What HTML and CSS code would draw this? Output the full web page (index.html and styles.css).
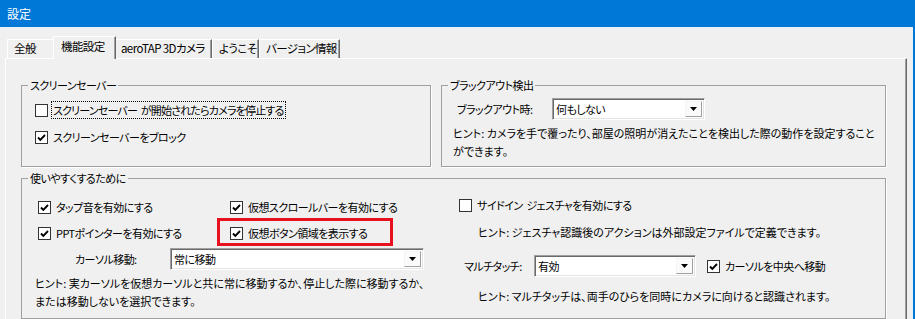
FILE: index.html
```html
<!DOCTYPE html>
<html lang="ja">
<head>
    <meta charset="UTF-8">
    <title>設定</title>
    <link rel="stylesheet" href="styles.css">
</head>
<body>

<div class="window">
    <div class="titlebar">設定</div>

    <div class="tabs">
        <div class="tab tab-general">全般</div>
        <div class="tab tab-active">機能設定</div>
        <div class="tab tab-camera">aeroTAP 3Dカメラ</div>
        <div class="tab tab-welcome">ようこそ</div>
        <div class="tab tab-version">バージョン情報</div>
    </div>

    <div class="panel">
        <div class="top-row">
            <fieldset class="group">
                <legend>スクリーンセーバー</legend>
                <div class="saver">
                    <div class="check">
                        <span class="box"></span>
                        <span class="text focus">スクリーンセーバー が開始されたらカメラを停止する</span>
                    </div>
                    <div class="check">
                        <span class="box checked"><svg viewBox="0 0 11 11"><polyline points="2,5.5 4.3,7.8 9,3"/></svg></span>
                        <span class="text">スクリーンセーバーをブロック</span>
                    </div>
                </div>
            </fieldset>

            <fieldset class="group">
                <legend>ブラックアウト検出</legend>
                <div class="blackout">
                    <div class="combo-row">
                        <span class="combo-label blackout-label">ブラックアウト時:</span>
                        <div class="combo blackout-combo">
                            <span class="value">何もしない</span>
                            <span class="arrow"><svg viewBox="0 0 7 4"><path d="M0 0H7L3.5 4Z"/></svg></span>
                        </div>
                    </div>
                    <p class="hint blackout-hint">ヒント: カメラを手で覆ったり、部屋の照明が消えたことを検出した際の動作を設定すること<br>ができます。</p>
                </div>
            </fieldset>
        </div>

        <fieldset class="group ease">
            <legend>使いやすくするために</legend>
            <div class="ease-cols">
                <div class="ease-left">
                    <div class="check-grid">
                        <div class="check">
                            <span class="box checked"><svg viewBox="0 0 11 11"><polyline points="2,5.5 4.3,7.8 9,3"/></svg></span>
                            <span class="text">タップ音を有効にする</span>
                        </div>
                        <div class="check">
                            <span class="box checked"><svg viewBox="0 0 11 11"><polyline points="2,5.5 4.3,7.8 9,3"/></svg></span>
                            <span class="text">仮想スクロールバーを有効にする</span>
                        </div>
                        <div class="check">
                            <span class="box checked"><svg viewBox="0 0 11 11"><polyline points="2,5.5 4.3,7.8 9,3"/></svg></span>
                            <span class="text">PPTポインターを有効にする</span>
                        </div>
                        <div class="check highlight">
                            <span class="box checked"><svg viewBox="0 0 11 11"><polyline points="2,5.5 4.3,7.8 9,3"/></svg></span>
                            <span class="text">仮想ボタン領域を表示する</span>
                        </div>
                    </div>
                    <div class="combo-row cursor-row">
                        <span class="combo-label cursor-label">カーソル移動:</span>
                        <div class="combo cursor-combo">
                            <span class="value">常に移動</span>
                            <span class="arrow"><svg viewBox="0 0 7 4"><path d="M0 0H7L3.5 4Z"/></svg></span>
                        </div>
                    </div>
                    <p class="hint cursor-hint">ヒント: 実カーソルを仮想カーソルと共に常に移動するか、停止した際に移動するか、<br>または移動しないを選択できます。</p>
                </div>

                <div class="ease-right">
                    <div class="check side-check">
                        <span class="box"></span>
                        <span class="text">サイドイン ジェスチャを有効にする</span>
                    </div>
                    <p class="hint gesture-hint">ヒント: ジェスチャ認識後のアクションは外部設定ファイルで定義できます。</p>
                    <div class="combo-row multi-row">
                        <span class="combo-label multi-label">マルチタッチ:</span>
                        <div class="combo multi-combo">
                            <span class="value">有効</span>
                            <span class="arrow"><svg viewBox="0 0 7 4"><path d="M0 0H7L3.5 4Z"/></svg></span>
                        </div>
                        <div class="check center-check">
                            <span class="box checked"><svg viewBox="0 0 11 11"><polyline points="2,5.5 4.3,7.8 9,3"/></svg></span>
                            <span class="text">カーソルを中央へ移動</span>
                        </div>
                    </div>
                    <p class="hint multi-hint">ヒント: マルチタッチは、両手のひらを同時にカメラに向けると認識されます。</p>
                </div>
            </div>
        </fieldset>
    </div>
</div>

</body>
</html>
```

FILE: styles.css
```css
body {
    margin: 0;
    font-family: "Noto Sans CJK JP", "Liberation Sans", sans-serif;
    font-size: 11px;
    letter-spacing: -0.55px;
    font-feature-settings: "palt";
    color: #000;
    background-color: #f0f0f0;
}
.window {
    width: 913px;
    height: 319px;
    border-right: 2px solid #0078d7;
    background-color: #f0f0f0;
    overflow: hidden;
}
.titlebar {
    height: 27px;
    line-height: 27px;
    padding-left: 7px;
    font-size: 12px;
    letter-spacing: 0;
    background-color: #0078d7;
    color: #fff;
}

/* tabs */
.tabs {
    display: flex;
    align-items: flex-end;
    height: 31px;
    padding-left: 7px;
}
.tab {
    box-sizing: border-box;
    height: 19px;
    line-height: 17px;
    padding-left: 6px;
    border-top: 1px solid #fff;
    border-left: 1px solid #fff;
    border-right: 1px solid #696969;
    box-shadow: inset -1px 0 #a0a0a0;
    white-space: nowrap;
    font-size: 11.5px;
    letter-spacing: -0.6px;
}
.tab-general { width: 48px; }
.tab-active {
    position: relative;
    z-index: 1;
    width: 63px;
    height: 23px;
    line-height: 18px;
    margin: 0 -2px -1px -2px;
    padding-left: 7px;
    background-color: #f0f0f0;
}
.tab-camera { width: 98px; }
.tab-welcome { width: 47px; }
.tab-version { width: 81px; }

.panel {
    box-sizing: border-box;
    width: 902px;
    height: 261px;
    margin-left: 5px;
    padding: 18px 20px 0 15px;
    border-top: 1px solid #fff;
    border-left: 1px solid #fff;
    border-right: 1px solid #696969;
    box-shadow: inset -1px 0 #a0a0a0;
}

/* group boxes */
.top-row {
    display: grid;
    grid-template-columns: 410px 445px;
    column-gap: 10px;
    margin-bottom: 3px;
}
.group {
    min-width: 0;
    margin: 0;
    padding: 0;
    border: 1px solid #a0a0a0;
    box-shadow: 1px 1px 0 #fff;
}
.group legend {
    margin-left: 6px;
    padding: 0 2px;
    line-height: 16px;
}

/* checkboxes */
.check {
    display: flex;
    align-items: center;
    height: 18px;
    white-space: nowrap;
}
.box {
    box-sizing: border-box;
    flex: none;
    width: 13px;
    height: 13px;
    margin-right: 4px;
    border: 1px solid #333;
    background-color: #fff;
}
.box svg {
    display: block;
    width: 11px;
    height: 11px;
}
.box polyline {
    fill: none;
    stroke: #000;
    stroke-width: 1.9;
}
.check .text {
    padding: 0 1px;
    line-height: 16px;
    word-spacing: 2px;
}
.focus {
    outline: 1px dotted #000;
    letter-spacing: -0.8px;
}

/* combo boxes */
.combo-row {
    display: flex;
    align-items: center;
}
.combo-label {
    flex: none;
    white-space: nowrap;
}
.combo {
    box-sizing: border-box;
    display: flex;
    height: 22px;
    border: 1px solid;
    border-color: #a0a0a0 #fff #fff #a0a0a0;
    box-shadow: inset 1px 1px 0 #696969, inset -1px -1px 0 #e3e3e3;
    background-color: #fff;
}
.combo .value {
    flex: 1;
    padding-left: 3px;
    line-height: 20px;
}
.combo .arrow {
    box-sizing: border-box;
    display: flex;
    align-items: center;
    justify-content: center;
    width: 17px;
    margin: 2px 2px 2px 0;
    border: 1px solid;
    border-color: #f4f4f4 #a0a0a0 #a0a0a0 #f4f4f4;
    background-color: #fafafa;
}
.combo .arrow svg {
    width: 7px;
    height: 4px;
}

.hint {
    margin: 0;
    line-height: 18px;
    letter-spacing: 0;
    white-space: nowrap;
}

/* screensaver */
.saver {
    display: flex;
    flex-direction: column;
    gap: 9px;
    padding: 8px 0 0 13px;
}

/* blackout */
.blackout {
    padding: 5px 0 6px 0;
}
.blackout-label {
    width: 95px;
    margin-left: 15px;
}
.blackout-combo { width: 153px; }
.blackout-hint {
    margin: 4px 0 0 11px;
}

/* ease of use */
.ease-cols {
    display: grid;
    grid-template-columns: 419px 1fr;
    height: 132px;
}
.check-grid {
    display: grid;
    grid-template-columns: 192px auto;
    row-gap: 8px;
    margin: 12px 0 0 16px;
}
.highlight {
    justify-self: start;
    margin: -6px 0 -4px -13px;
    padding: 3px 22px 1px 10px;
    border: 3px solid #e8111e;
}
.cursor-row {
    margin: 6px 0 0 53px;
}
.cursor-label { width: 95px; }
.cursor-combo { width: 254px; }
.cursor-hint {
    margin: 4px 0 0 13px;
}

.side-check {
    margin: 10px 0 0 18px;
}
.gesture-hint {
    margin: 9px 0 0 37px;
}
.multi-row {
    margin: 14px 0 0 23px;
}
.multi-label { width: 70px; }
.multi-combo { width: 162px; }
.center-check {
    margin-left: 11px;
}
.multi-hint {
    margin: 10px 0 0 37px;
}
```
